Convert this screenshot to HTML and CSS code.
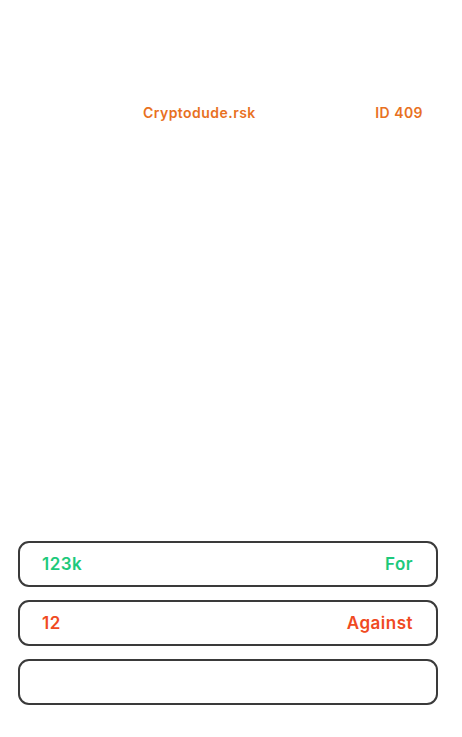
FILE: index.html
```html
<!DOCTYPE html>
<html>
<head>
<meta charset="utf-8">
<link rel="stylesheet" href="styles.css">
</head>
<body>
<div class="page">
  <div class="header">
    <span class="name">Cryptodude.rsk</span>
    <span class="id">ID 409</span>
  </div>
  <div class="spacer"></div>
  <div class="options">
    <div class="option">
      <span class="for">123k</span>
      <span class="for">For</span>
    </div>
    <div class="option">
      <span class="against">12</span>
      <span class="against">Against</span>
    </div>
    <div class="option"></div>
  </div>
</div>
</body>
</html>
```

FILE: styles.css
```css
html, body {
  margin: 0;
  padding: 0;
  background: #ffffff;
}
body {
  font-family: Inter, "Liberation Sans", sans-serif;
  width: 462px;
  height: 737px;
  overflow: hidden;
}
.page {
  display: flex;
  flex-direction: column;
  height: 737px;
}
.header {
  display: flex;
  justify-content: space-between;
  align-items: center;
  margin: 102px 39px 0 143px;
  height: 20px;
  font-size: 14px;
  font-weight: 600;
  color: #e8711f;
  letter-spacing: 0.45px;
}
.spacer {
  flex: 1;
}
.options {
  display: flex;
  flex-direction: column;
  gap: 13px;
  padding: 0 24px 32px 18px;
}
.option {
  box-sizing: border-box;
  height: 46px;
  border: 2px solid #3a3a3a;
  border-radius: 11px;
  display: flex;
  justify-content: space-between;
  align-items: center;
  padding: 0 23px 0 22px;
  font-size: 17px;
  font-weight: 600;
  letter-spacing: 0.5px;
}
.for {
  color: #1dc97b;
}
.against {
  color: #f04a22;
}
```
